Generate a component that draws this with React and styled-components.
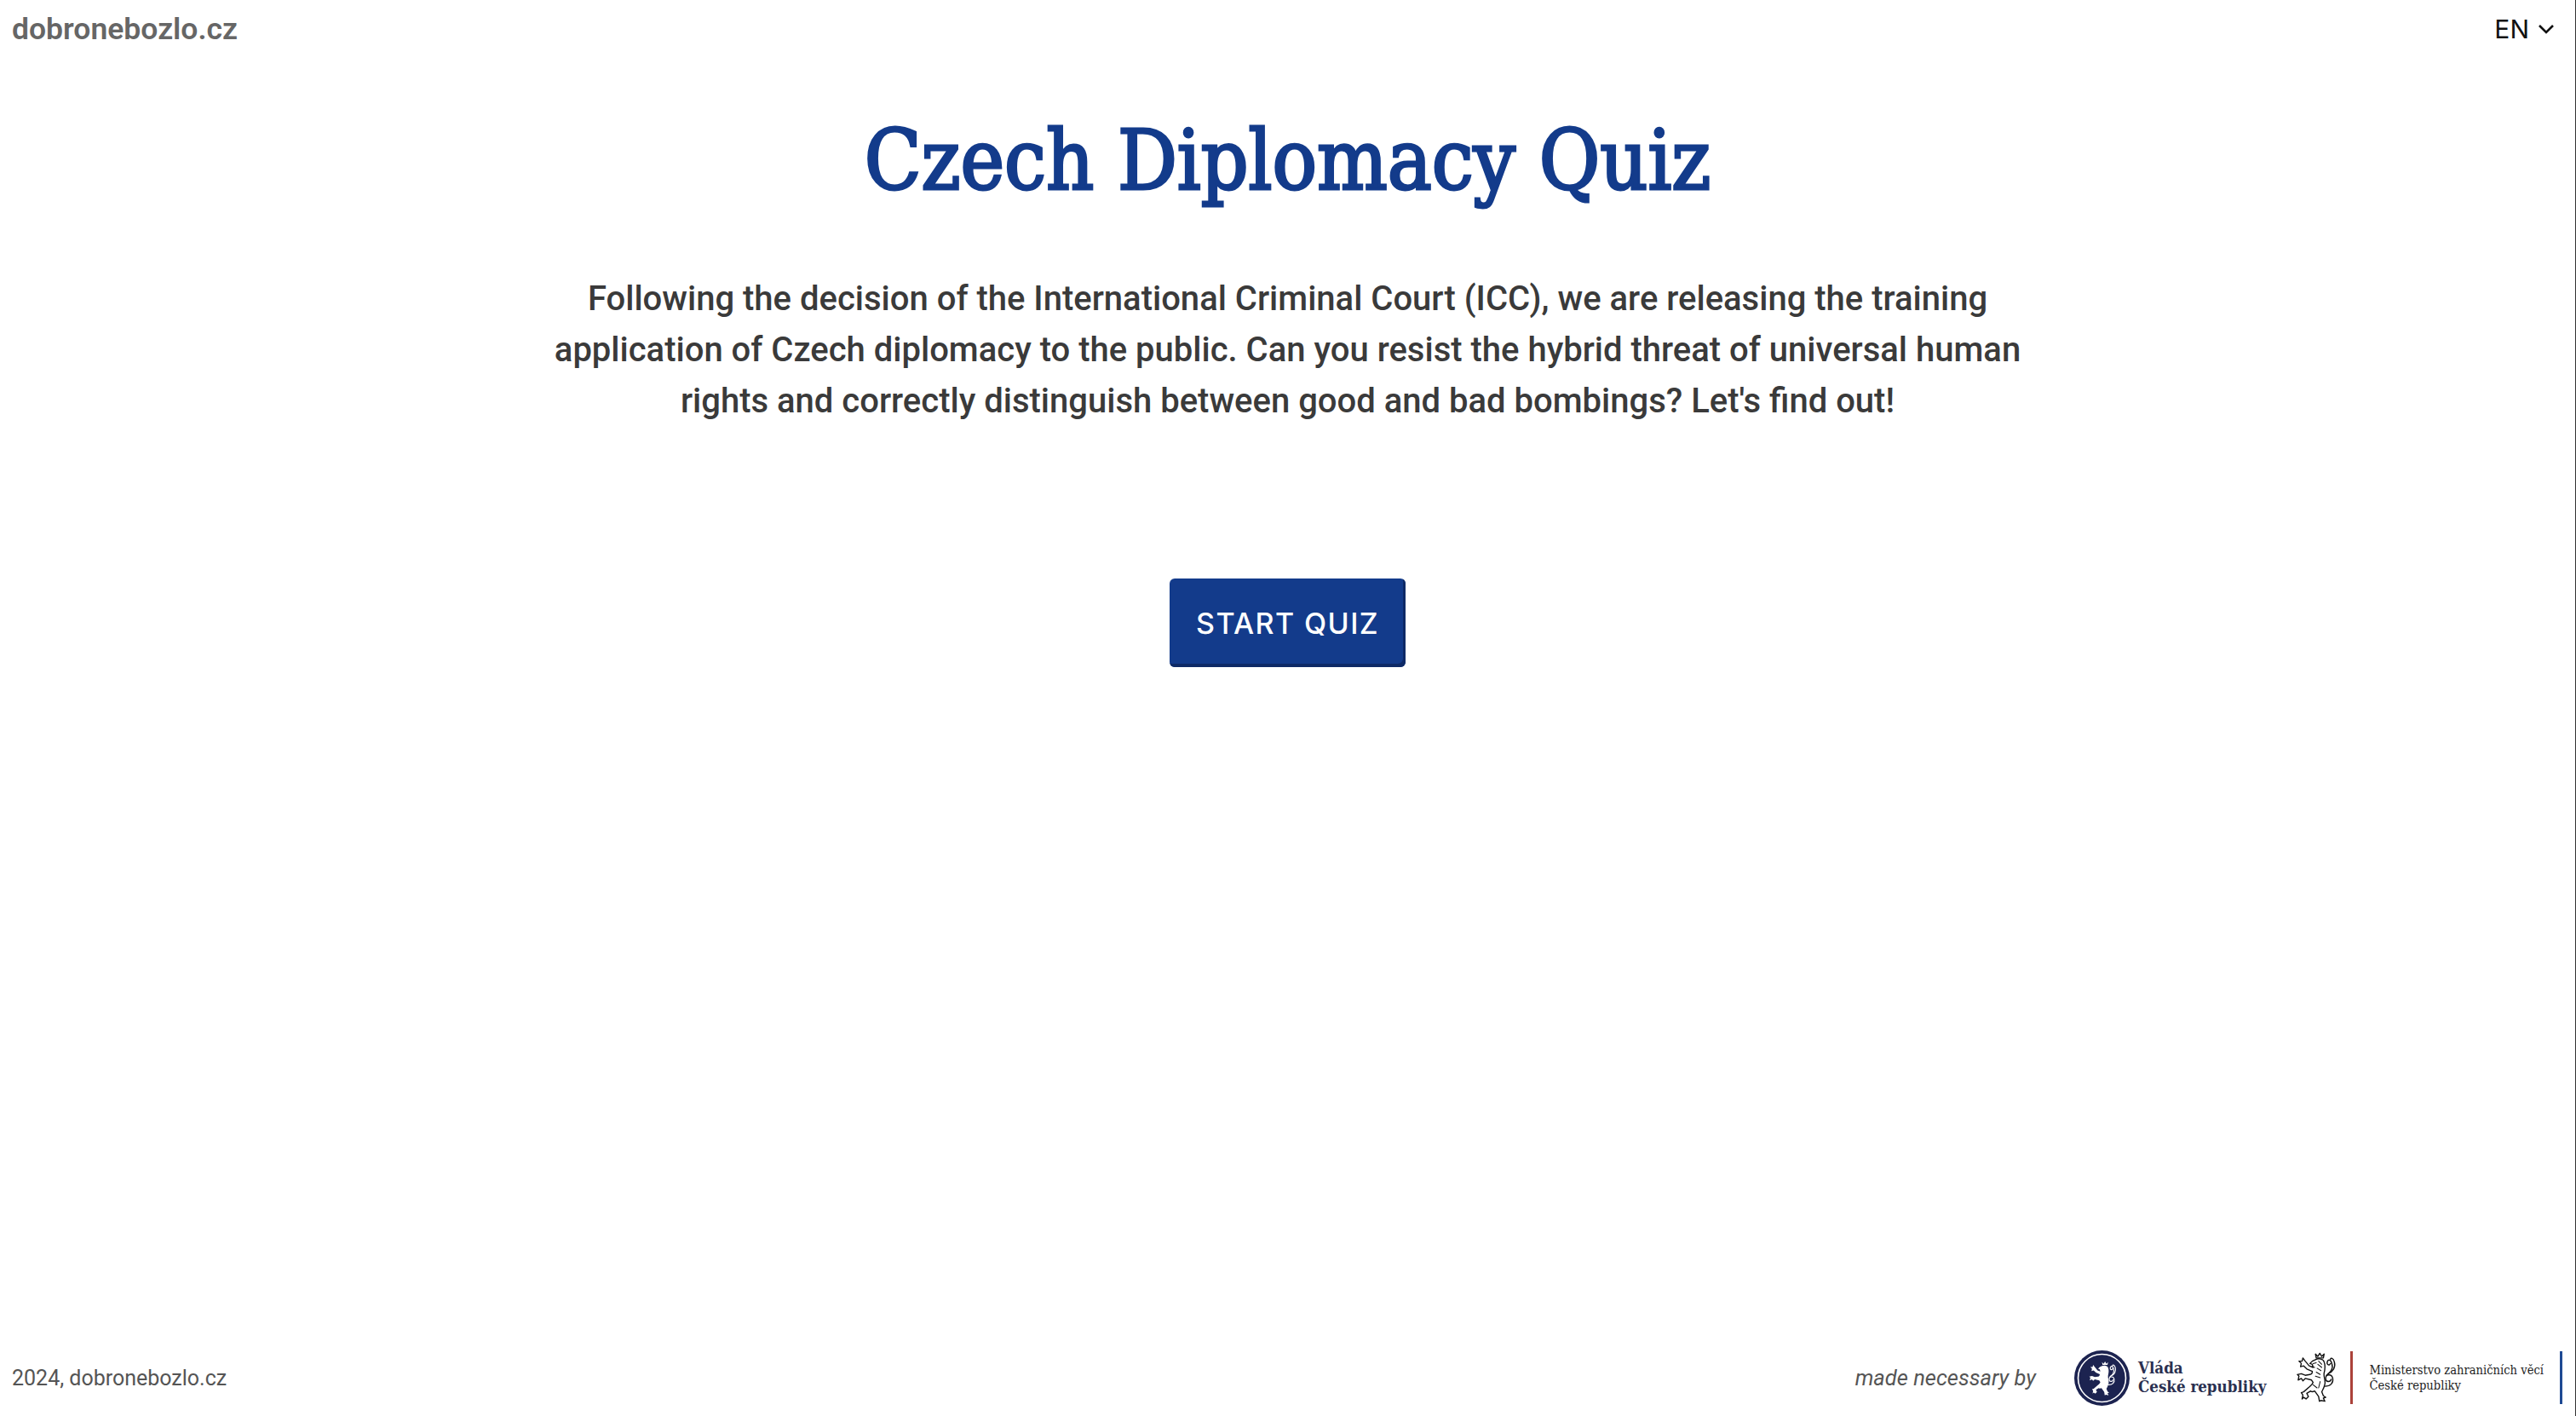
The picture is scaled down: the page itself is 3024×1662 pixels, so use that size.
import React from "react";
import styled, { createGlobalStyle } from "styled-components";

const Global = createGlobalStyle`
  html, body { margin: 0; padding: 0; background: #fff; }
  #root { height: 1662px; }
`;
const Page = styled.div`
  height: 1662px; width: 3024px; display: flex; flex-direction: column; box-sizing: border-box;
  font-family: Roboto, sans-serif; border-right: 1px solid #333;
`;
const Header = styled.header`
  height: 68px; padding: 0 14px; display: flex; justify-content: space-between; align-items: center; box-sizing: border-box;
`;
const Brand = styled.div`font-size: 35.5px; font-weight: 600; color: #666; margin-top: -1px;`;
const Lang = styled.div`
  display: flex; align-items: center; gap: 10px; font-family: Inter, sans-serif; font-size: 30px; color: #111; padding-right: 10px;
`;
const Main = styled.main`
  flex: 1; display: flex; flex-direction: column; align-items: center;
`;
const Title = styled.h1`
  margin: 64px 0 0; font-family: "DejaVu Serif Condensed", serif; font-size: 97px; font-weight: 400; line-height: 114px; color: #133b8b; text-align: center;
  -webkit-text-stroke: 3px #133b8b;
`;
const Lead = styled.p`
  margin: 75px 0 0; width: 1780px; text-align: center; font-size: 40px; line-height: 60px; font-weight: 500; color: #3a3a3a;
`;
const StartButton = styled.button`
  margin-top: 178px; width: 277px; height: 104px; border: 0; border-radius: 6px; background: #133b8b; color: #fff;
  font-family: Inter, sans-serif; font-size: 34px; font-weight: 500; letter-spacing: 1.4px;
  box-shadow: inset -3px -4px 0 #0e2a66;
`;
const Footer = styled.footer`
  height: 90px; display: flex; justify-content: space-between; align-items: center; padding: 0 0 0 14px; box-sizing: border-box;
`;
const Copyright = styled.div`font-size: 25px; color: #555;`;
const Credits = styled.div`display: flex; align-items: center;`;
const Necessary = styled.span`font-size: 25.5px; font-style: italic; color: #555; margin-right: 45px;`;
const Vlada = styled.div`display: flex; align-items: center; gap: 10px; margin-right: 36px;`;
const VladaText = styled.div`
  font-family: "DejaVu Serif Condensed", serif; font-size: 18.6px; line-height: 22px; font-weight: 700; color: #2a3050;
`;
const Mzv = styled.div`display: flex; align-items: center;`;
const MzvText = styled.div`
  font-family: "DejaVu Serif Condensed", serif; font-size: 14.6px; line-height: 18px; color: #222; margin: 0 19px; white-space: nowrap;
`;
const Rule = styled.div`width: 3px; height: 62px; background: ${p => p.$color};`;
const RedRule = styled(Rule)`margin-left: 15px;`;
const BlueRule = styled(Rule)`margin-right: 15px;`;

const Lion = ({ fill, stroke, sw }) => (
  <g strokeLinejoin="round" strokeLinecap="round">
    <path fill={fill} stroke={stroke} strokeWidth={sw} d="M28 10L27 5l3 3 2.500-4 2.500 4 3-3-1 5z" />
    <path fill={fill} stroke={stroke} strokeWidth={sw} d="M27 12C31 10 37 11 38 15C40 20 39 25 38 29C37 34 40 38 39 43C38 48 36 51 35 53L37 58L40 60L37 61L39 65L34 64L32 65L31 59L26 52C24 53 22 53 21 52L16 55L18 59L15 62L12 60L10 62L11 57L9 54L12 53L19 47C21 45 23 44 24 41L22 38L14 36L11 39L9 36L5 38L6 33L4 31L9 30L14 32L20 31C22 31 23 29 23 27L16 24L12 20L8 21L9 17L6 14L10 14L11 10L14 14L19 20L24 22L23 18L20 17L23 14Z" />
    <g fill="none" stroke={stroke || fill} strokeWidth={sw || 1.8}>
      <path d="M39 46C46 46 50 42 49 36C48 30 40 30 40 36C40 41 46 41 47 37" />
      <path d="M41 32C46 28 50 24 48 18C47 12 43 11 42 15C41 19 45 20 46 17" />
      <path d="M43 30C49 28 53 22 51 15C50 10 46 9 46 12" />
    </g>
  </g>
);

const LionDetail = () => (
  <g fill="none" stroke="#111" strokeWidth="1.1" strokeLinecap="round">
    <path d="M31 14l4 4M30 18l5 4M29 23l5 3M28 28l5 3M27 33l6 2" />
    <path d="M24 17l4-1M23 21l3 1" />
    <path d="M24 44l5 4M33 40l-2 8" />
  </g>
);

export default function App() {
  return (
    <Page>
      <Global />
      <Header>
        <Brand>dobronebozlo.cz</Brand>
        <Lang>EN
          <svg width="20" height="12" viewBox="0 0 20 12" fill="none" stroke="#111" strokeWidth="2.6"><path d="M2 2l8 8 8-8" /></svg>
        </Lang>
      </Header>
      <Main>
        <Title>Czech Diplomacy Quiz</Title>
        <Lead>Following the decision of the International Criminal Court (ICC), we are releasing the training application of Czech diplomacy to the public. Can you resist the hybrid threat of universal human rights and correctly distinguish between good and bad bombings? Let's find out!</Lead>
        <StartButton>START QUIZ</StartButton>
      </Main>
      <Footer>
        <Copyright>2024, dobronebozlo.cz</Copyright>
        <Credits>
          <Necessary>made necessary by</Necessary>
          <Vlada>
            <svg width="65" height="65" viewBox="0 0 65 65">
              <circle cx="32.500" cy="32.500" r="32.500" fill="#1c2350" />
              <circle cx="32.500" cy="32.500" r="28" fill="none" stroke="#fff" strokeWidth="1.6" />
              <g transform="translate(15 10.500) scale(0.65)"><Lion fill="#fff" /></g>
            </svg>
            <VladaText>Vláda<br />České republiky</VladaText>
          </Vlada>
          <Mzv>
            <svg width="48" height="62" viewBox="3 4 52 62">
              <Lion fill="#fff" stroke="#111" sw="1.5" />
              <LionDetail />
            </svg>
            <RedRule $color="#ab423a" />
            <MzvText>Ministerstvo zahraničních věcí<br />České republiky</MzvText>
            <BlueRule $color="#1f4a94" />
          </Mzv>
        </Credits>
      </Footer>
    </Page>
  );
}
